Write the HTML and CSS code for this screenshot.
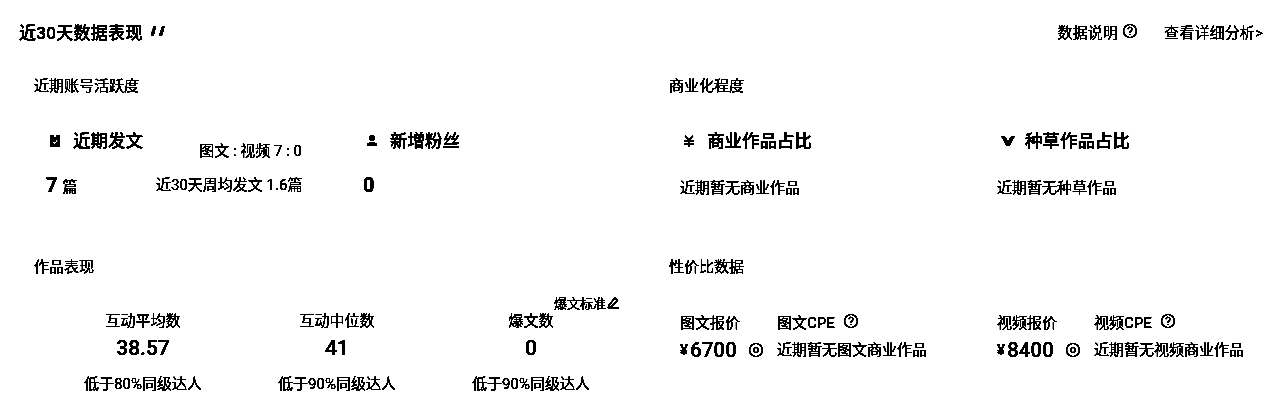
FILE: index.html
```html
<!DOCTYPE html>
<html lang="zh-CN">
<head>
    <meta charset="UTF-8">
    <meta name="viewport" content="width=device-width, initial-scale=1.0">
    <title>近30天数据表现</title>
    <link rel="stylesheet" href="styles.css">
</head>
<body>
    <div class="container">
        <div class="header">
            <h1 class="page-title">近30天数据表现
                <svg class="title-mark" width="16" height="12" viewBox="0 0 16 12"><path d="M1 11 L1 9 L3.500 1.500 L6 1 L5.500 4 L3.500 11 Z M9.500 11 L9.500 9 L12 1.500 L14.500 1 L14 4 L12 11 Z"/></svg>
            </h1>
            <div class="header-links">
                <span class="header-link">数据说明
                    <svg class="help" width="16" height="16" viewBox="0 0 16 16"><circle cx="8" cy="8" r="6.500"/><path d="M6 6.300a2 2 0 1 1 3 1.700c-.7.400-1 .8-1 1.600M8 11v1"/></svg>
                </span>
                <span class="header-link">查看详细分析&gt;</span>
            </div>
        </div>

        <div class="grid">
            <section class="section">
                <h2 class="section-title">近期账号活跃度</h2>
                <div class="activity">
                    <div class="metric">
                        <div class="metric-title">
                            <svg width="12" height="14" viewBox="0 0 12 14"><path class="solid" d="M1 1h4v2h2V1h4v12H1z"/><path class="tick" d="M3.500 7.500l2 2 3-3.500"/></svg>
                            近期发文
                        </div>
                        <div class="metric-value">7 <small>篇</small></div>
                    </div>
                    <div class="note">
                        <p class="note-top">图文 : 视频 7 : 0</p>
                        <p class="note-bottom">近30天周均发文 1.6篇</p>
                    </div>
                    <div class="metric metric-fans">
                        <div class="metric-title">
                            <svg width="12" height="14" viewBox="0 0 12 14"><circle class="solid" cx="6" cy="4" r="3"/><path class="solid" d="M1 12c0-3 2-4 5-4s5 1 5 4z"/></svg>
                            新增粉丝
                        </div>
                        <div class="metric-value">0</div>
                    </div>
                </div>
            </section>

            <section class="section">
                <h2 class="section-title">商业化程度</h2>
                <div class="two-col commercial">
                    <div>
                        <div class="metric-title">
                            <svg width="12" height="14" viewBox="0 0 12 14"><path class="line" d="M2 1.500L6 6l4-4.500M1.500 7h9M1.500 10h9M6 6v7"/></svg>
                            商业作品占比
                        </div>
                        <p class="empty">近期暂无商业作品</p>
                    </div>
                    <div>
                        <div class="metric-title metric-title-tight">
                            <svg width="16" height="14" viewBox="0 0 16 14"><path class="solid" d="M1 2h3.500L8 7l3.500-5H15L9.500 12h-3z"/></svg>
                            种草作品占比
                        </div>
                        <p class="empty">近期暂无种草作品</p>
                    </div>
                </div>
            </section>

            <section class="section">
                <h2 class="section-title">作品表现</h2>
                <div class="burst-link">爆文标准
                    <svg width="13" height="13" viewBox="0 0 13 13"><path class="line" d="M2 9l6-7 2.500 2-6 7-3 .5zM1 12.300h11"/></svg>
                </div>
                <div class="works">
                    <div class="work">
                        <div class="work-title">互动平均数</div>
                        <div class="work-value">38.57</div>
                        <div class="work-sub">低于80%同级达人</div>
                    </div>
                    <div class="work">
                        <div class="work-title">互动中位数</div>
                        <div class="work-value">41</div>
                        <div class="work-sub">低于90%同级达人</div>
                    </div>
                    <div class="work">
                        <div class="work-title">爆文数</div>
                        <div class="work-value">0</div>
                        <div class="work-sub">低于90%同级达人</div>
                    </div>
                </div>
            </section>

            <section class="section">
                <h2 class="section-title">性价比数据</h2>
                <div class="two-col cost">
                    <div class="cost-group">
                        <div class="cost-price">
                            <div class="cost-label">图文报价</div>
                            <div class="cost-value"><small>¥</small>6700
                                <svg class="target" width="16" height="16" viewBox="0 0 16 16"><circle cx="8" cy="8" r="6.500"/><circle cx="8" cy="8" r="2.500"/></svg>
                            </div>
                        </div>
                        <div>
                            <div class="cost-label">图文CPE
                                <svg class="help" width="16" height="16" viewBox="0 0 16 16"><circle cx="8" cy="8" r="6.500"/><path d="M6 6.300a2 2 0 1 1 3 1.700c-.7.400-1 .8-1 1.600M8 11v1"/></svg>
                            </div>
                            <div class="cost-text">近期暂无图文商业作品</div>
                        </div>
                    </div>
                    <div class="cost-group">
                        <div class="cost-price">
                            <div class="cost-label">视频报价</div>
                            <div class="cost-value"><small>¥</small>8400
                                <svg class="target" width="16" height="16" viewBox="0 0 16 16"><circle cx="8" cy="8" r="6.500"/><circle cx="8" cy="8" r="2.500"/></svg>
                            </div>
                        </div>
                        <div>
                            <div class="cost-label">视频CPE
                                <svg class="help" width="16" height="16" viewBox="0 0 16 16"><circle cx="8" cy="8" r="6.500"/><path d="M6 6.300a2 2 0 1 1 3 1.700c-.7.400-1 .8-1 1.600M8 11v1"/></svg>
                            </div>
                            <div class="cost-text">近期暂无视频商业作品</div>
                        </div>
                    </div>
                </div>
            </section>
        </div>
    </div>
</body>
</html>
```
FILE: styles.css
```css
* {
    box-sizing: border-box;
}
body {
    margin: 0;
    background: #fff;
    color: #000;
    font-family: "Roboto", "Noto Sans CJK SC", sans-serif;
    font-size: 15px;
}
/* the source is a hard black and white picture, so push the text to two tones */
.container {
    height: 411px;
    overflow: hidden;
    background: #fff;
    filter: grayscale(1) brightness(.6) contrast(20);
}
.header {
    display: flex;
    justify-content: space-between;
    align-items: center;
    height: 62px;
    padding: 0 17px 0 19px;
}
.page-title {
    display: flex;
    align-items: center;
    gap: 7px;
    margin: 0;
    font-size: 17px;
    font-weight: 500;
    letter-spacing: .3px;
}
.title-mark path {
    fill: #000;
}
.header-links {
    display: flex;
    gap: 26px;
    font-size: 15px;
    letter-spacing: .15px;
}
.header-link {
    display: flex;
    align-items: center;
    gap: 4px;
}
svg {
    flex: none;
}
.help circle,
.help path,
.target circle {
    fill: none;
    stroke: #000;
    stroke-width: 1.2;
}
.solid {
    fill: #000;
}
.tick {
    fill: none;
    stroke: #fff;
    stroke-width: 1.5;
}
.line {
    fill: none;
    stroke: #000;
    stroke-width: 1.4;
}
.grid {
    display: grid;
    grid-template-columns: 635px 1fr;
    grid-template-rows: 181px 1fr;
    padding-left: 34px;
}
.section {
    padding-top: 14px;
}
.section-title {
    margin: 0;
    font-size: 15px;
    font-weight: 400;
    line-height: 20px;
}
.activity {
    display: flex;
    padding: 32px 0 0 12px;
}
.metric {
    width: 110px;
}
.metric-title {
    display: flex;
    align-items: center;
    gap: 12px;
    padding-left: 3px;
    font-size: 17.5px;
    font-weight: 500;
    line-height: 26px;
}
.metric-value {
    margin-top: 18px;
    font-size: 20px;
    font-weight: 700;
    line-height: 26px;
}
.metric-value small {
    font-size: 15px;
    font-weight: 500;
}
.note {
    width: 146px;
    text-align: right;
    white-space: nowrap;
}
.note p {
    margin: 0;
    line-height: 20px;
}
.note-top {
    padding-top: 13px;
}
.note-bottom {
    padding-top: 14px;
}
.metric-fans {
    margin-left: 61px;
}
.two-col {
    display: grid;
    grid-template-columns: 317px 1fr;
    padding-left: 11px;
}
.commercial {
    padding-top: 32px;
}
.commercial .metric-title {
    padding-left: 3px;
}
.commercial .metric-title-tight {
    gap: 9px;
}
.empty {
    margin: 24px 0 0;
    line-height: 20px;
}
.burst-link {
    display: flex;
    justify-content: flex-end;
    align-items: center;
    gap: 1px;
    width: 586px;
    height: 17px;
    margin-top: 17px;
    font-size: 13px;
}
.works {
    display: grid;
    grid-template-columns: repeat(3, 194px);
    margin-left: 12px;
}
.work {
    text-align: center;
}
.work-title {
    line-height: 20px;
    font-size: 15px;
}
.work-value {
    margin-top: 4px;
    font-size: 21px;
    font-weight: 500;
    line-height: 26px;
}
.work-sub {
    margin-top: 13px;
    line-height: 20px;
}
.cost {
    padding-top: 34px;
}
.cost-group {
    display: flex;
}
.cost-price {
    width: 97px;
}
.cost-label {
    display: flex;
    align-items: center;
    gap: 8px;
    height: 20px;
    font-size: 15px;
}
.cost-value {
    display: flex;
    align-items: center;
    margin-top: 6px;
    font-size: 20px;
    font-weight: 500;
    letter-spacing: .3px;
    line-height: 26px;
}
.cost-value small {
    margin-right: 2px;
    font-size: 15px;
}
.cost-value .target {
    margin-left: 11px;
}
.cost-text {
    margin-top: 6px;
    line-height: 26px;
}
```
